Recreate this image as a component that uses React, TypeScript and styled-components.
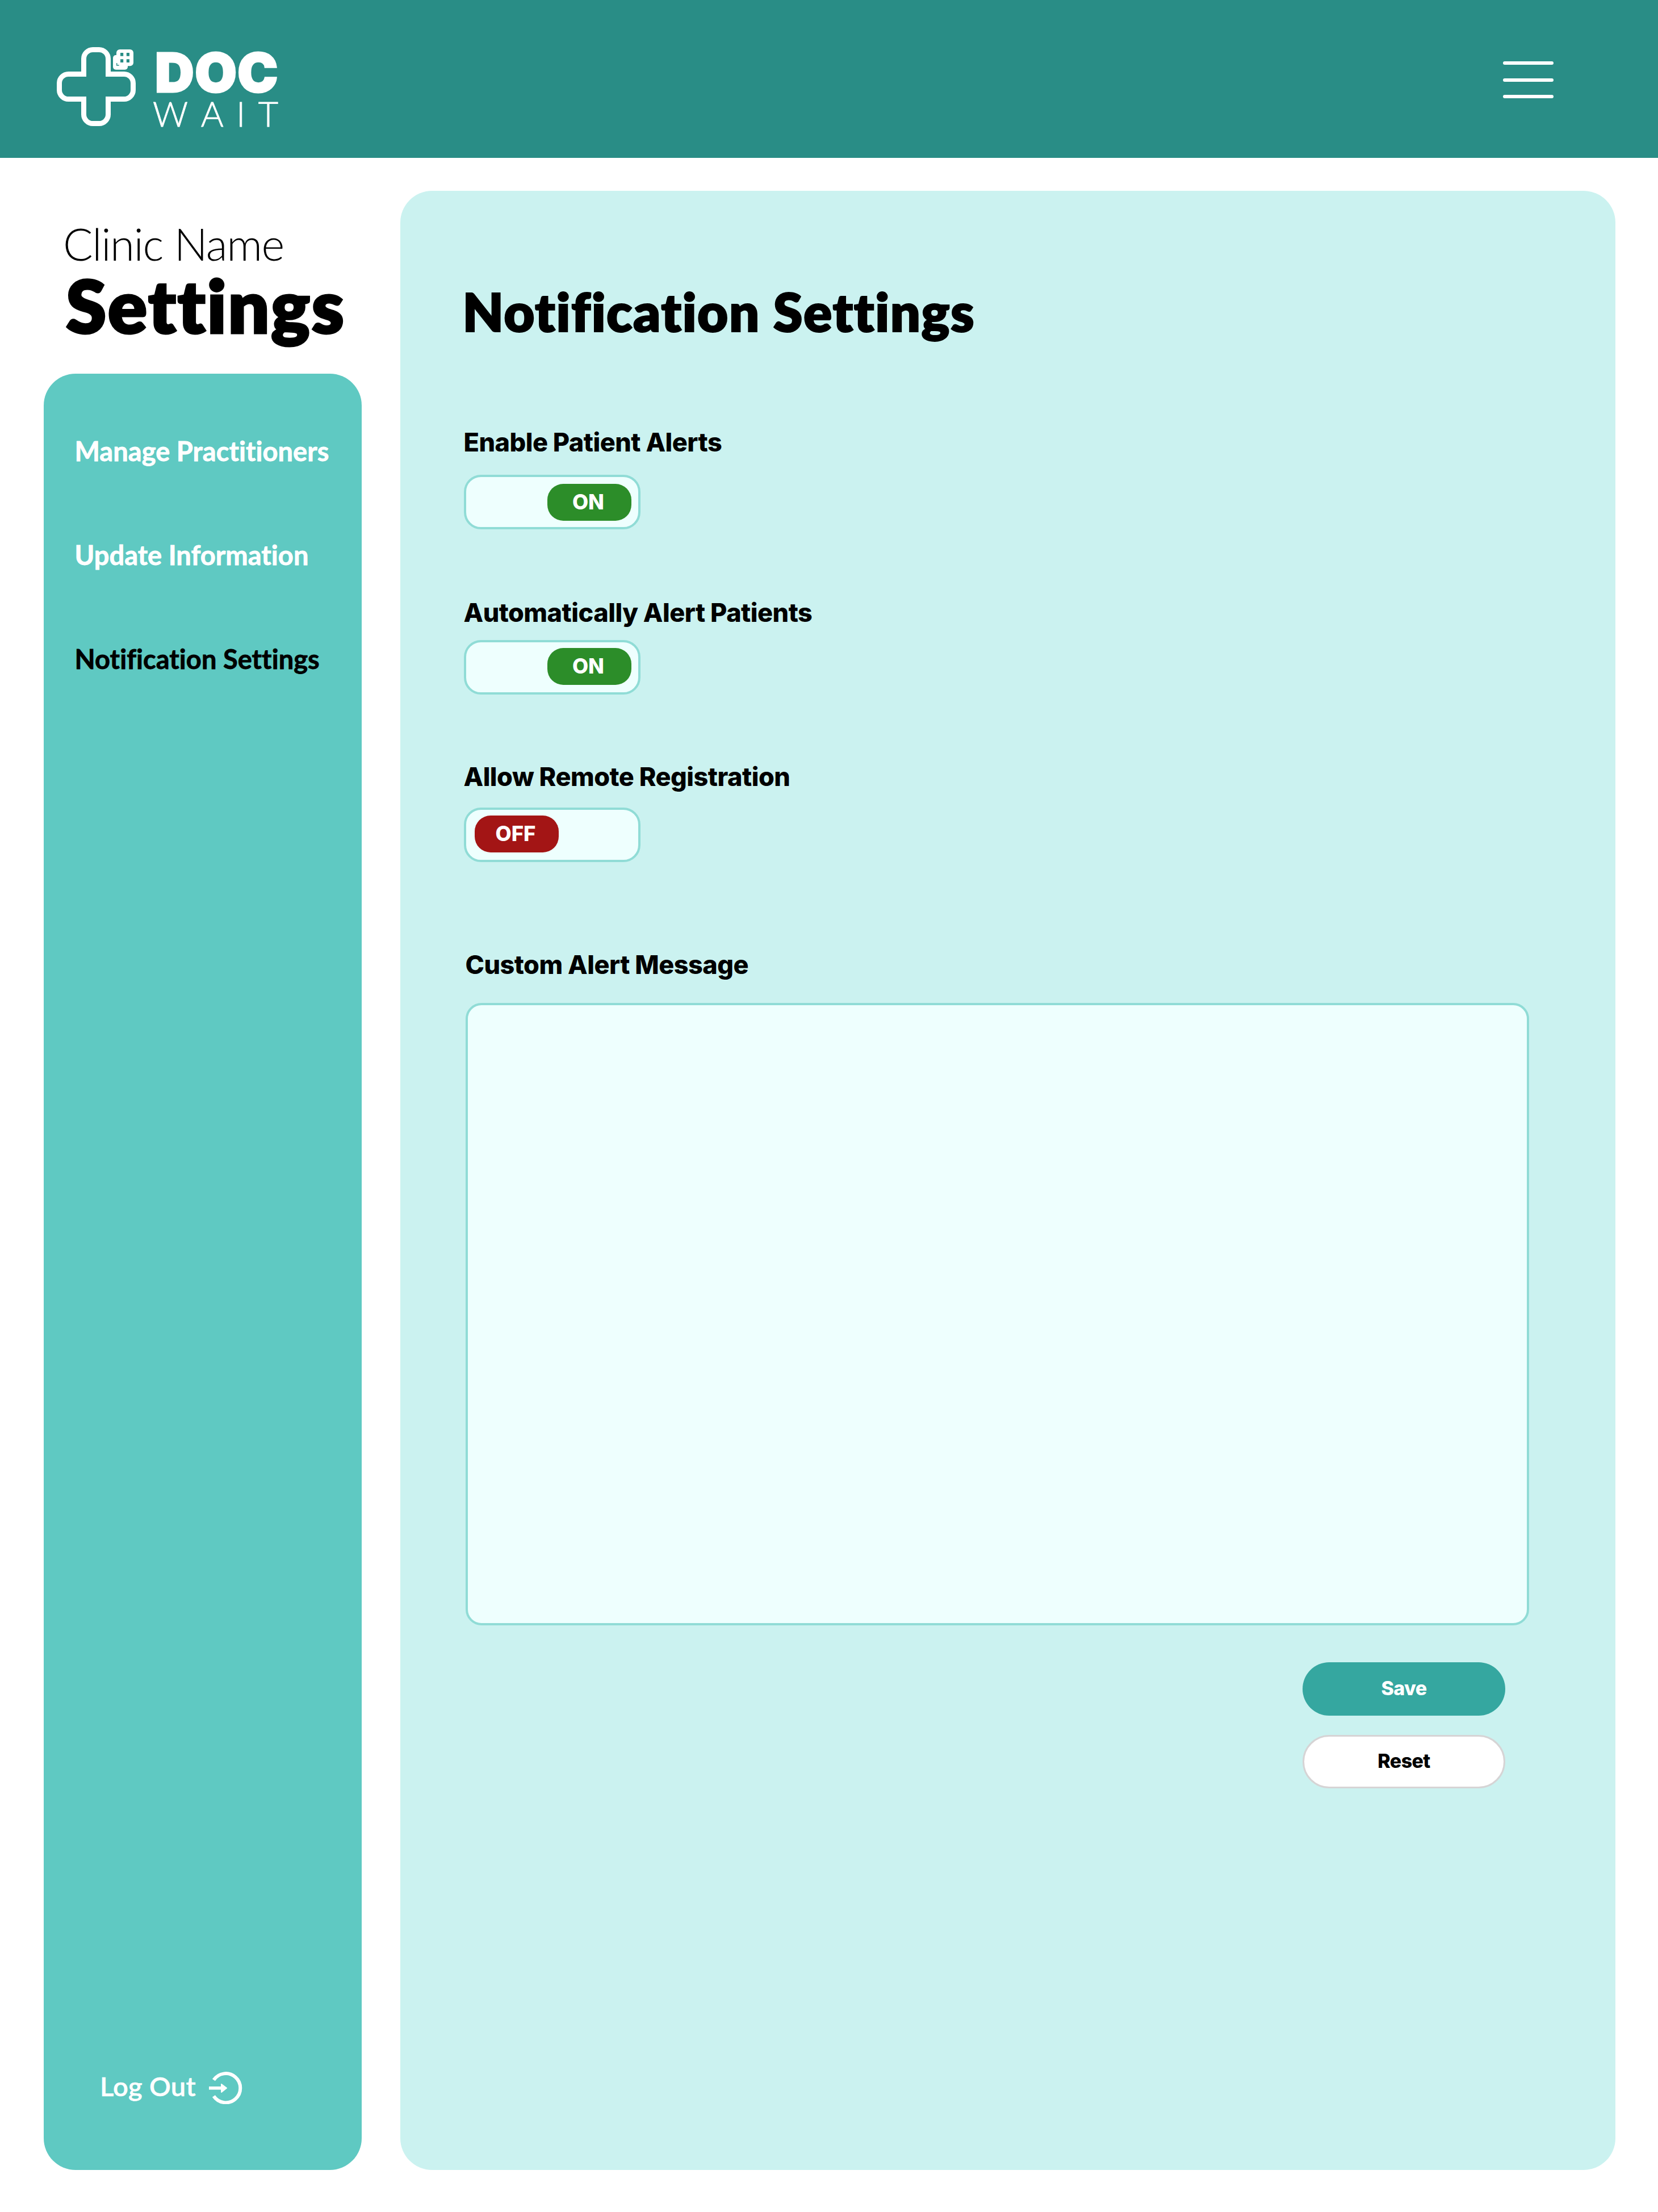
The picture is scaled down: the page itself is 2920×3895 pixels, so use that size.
import React from 'react';
import styled, { createGlobalStyle } from 'styled-components';

const GlobalStyle = createGlobalStyle`
  *, *::before, *::after { box-sizing: border-box; }
  body {
    margin: 0;
    background: #ffffff;
    color: #000000;
    font-family: Inter, 'Liberation Sans', sans-serif;
  }
  h1, h2, p { margin: 0; }
`;

const display = "Lato, 'Open Sans', sans-serif";

const Page = styled.div`
  width: 2920px;
  height: 3895px;
  display: flex;
  flex-direction: column;
`;

const Header = styled.header`
  flex: none;
  height: 278px;
  padding: 0 184px 0 95px;
  display: flex;
  justify-content: space-between;
  align-items: flex-start;
  background: #298d86;
  color: #ffffff;
`;

const Brand = styled.a`
  display: flex;
  padding-top: 78px;
`;

const LogoMark = styled.svg`
  width: 150px;
  height: 150px;
`;

const Wordmark = styled.div`
  display: flex;
  flex-direction: column;
  padding-top: 2px;
  margin-left: 24px;
`;

const WordTop = styled.span`
  margin-left: 4px;
  font-size: 95px;
  font-weight: 900;
  line-height: 1;
  letter-spacing: 1.5px;
  -webkit-text-stroke: 3px currentColor;
`;

const WordBottom = styled.span`
  margin-top: -6px;
  font-family: ${display};
  font-size: 61px;
  font-weight: 300;
  line-height: 1;
  letter-spacing: 22.6px;
  font-kerning: none;
  -webkit-text-stroke: 0.8px currentColor;
`;

const MenuButton = styled.button`
  margin: 108px 0 0;
  padding: 0;
  border: 0;
  background: none;
  width: 89px;
  height: 65px;
  display: flex;
  flex-direction: column;
  justify-content: space-between;
`;

const MenuLine = styled.span`
  height: 6px;
  border-radius: 3px;
  background: #ffffff;
`;

const Body = styled.div`
  flex: 1;
  display: flex;
  padding: 0 75px 74px 77px;
`;

const Sidebar = styled.aside`
  width: 560px;
  display: flex;
  flex-direction: column;
`;

const SidebarHeading = styled.div`
  height: 380px;
  padding: 112px 0 0 34px;
  display: flex;
  flex-direction: column;
  font-family: ${display};
  white-space: nowrap;
`;

const ClinicName = styled.p`
  font-size: 78px;
  font-weight: 300;
  line-height: 1;
  letter-spacing: -1.4px;
`;

const SidebarTitle = styled.h1`
  margin: 5px 0 0 5px;
  font-size: 129px;
  font-weight: 800;
  line-height: 1;
  letter-spacing: 2.3px;
  -webkit-text-stroke: 3px currentColor;
`;

const Nav = styled.nav`
  flex: 1;
  display: flex;
  flex-direction: column;
  gap: 136px;
  padding: 113px 53px 116px 54.5px;
  border-radius: 56px;
  background: #5fc9c2;
  font-family: ${display};
  font-size: 47px;
  line-height: 1;
  letter-spacing: 0.05px;
  white-space: nowrap;
`;

const NavItem = styled.a<{ $active?: boolean }>`
  color: ${p => (p.$active ? '#000000' : '#ffffff')};
  font-weight: 700;
  -webkit-text-stroke: 0.8px currentColor;
`;

const LogOut = styled.a`
  margin: auto 0 0 44.5px;
  display: flex;
  align-items: center;
  gap: 22px;
  color: #ffffff;
  font-weight: 600;
  letter-spacing: 0.3px;
`;

const LogOutText = styled.span`
  padding-bottom: 6px;
  -webkit-text-stroke: 0.5px currentColor;
`;

const LogOutIcon = styled.svg`
  width: 60px;
  height: 57px;
`;

const Panel = styled.main`
  flex: 1;
  margin: 58px 0 0 68px;
  padding: 166px 152px 0 111.5px;
  border-radius: 56px;
  background: #cbf2f0;
  display: flex;
  flex-direction: column;
`;

const PanelTitle = styled.h2`
  height: 94px;
  margin: 0 0 160.3px -2px;
  font-family: ${display};
  font-size: 93.5px;
  font-weight: 800;
  line-height: 1;
  letter-spacing: 1.5px;
  -webkit-text-stroke: 2px currentColor;
`;

const Field = styled.section<{ $gap: number; $after: number }>`
  display: flex;
  flex-direction: column;
  align-items: flex-start;
  gap: ${p => p.$gap}px;
  margin-bottom: ${p => p.$after}px;
`;

const Label = styled.label`
  height: 45px;
  font-size: 45px;
  font-weight: 800;
  line-height: 45px;
  letter-spacing: -0.5px;
  white-space: nowrap;
`;

const Track = styled.button<{ $on: boolean; $inset: number }>`
  width: 311px;
  height: 96px;
  padding: ${p => p.$inset}px 12px 0 15px;
  border: 4px solid #90dcd6;
  border-radius: 30px;
  background: #eefffe;
  display: flex;
  align-items: flex-start;
  justify-content: ${p => (p.$on ? 'flex-end' : 'flex-start')};
`;

const Knob = styled.span<{ $on: boolean }>`
  width: 148px;
  height: 65px;
  padding-right: 3px;
  border-radius: 28px;
  background: ${p => (p.$on ? '#2c8d29' : '#a31515')};
  color: #ffffff;
  font: 800 36.5px/65px Inter, 'Liberation Sans', sans-serif;
  text-align: center;
`;

const MessageField = styled(Field)`
  align-items: stretch;
  padding-left: 3px;
`;

const MessageBox = styled.textarea`
  display: block;
  width: 100%;
  height: 1096px;
  padding: 32px;
  border: 4px solid #90dcd6;
  border-radius: 28px;
  background: #eefffe;
  font: 400 40px/1.4 Inter, 'Liberation Sans', sans-serif;
  resize: none;
  outline: none;
`;

const Actions = styled.div`
  display: flex;
  flex-direction: column;
  align-items: flex-end;
  gap: 34px;
  padding-right: 42px;
`;

const ActionButton = styled.button<{ $primary?: boolean }>`
  width: 357px;
  height: 94px;
  padding: 0 0 2px;
  border: ${p => (p.$primary ? '0' : '3.5px solid #d6d4d5')};
  border-radius: 47px;
  background: ${p => (p.$primary ? '#35a7a0' : '#ffffff')};
  color: ${p => (p.$primary ? '#ffffff' : '#000000')};
  font: 800 34px/1 Inter, 'Liberation Sans', sans-serif;
  letter-spacing: -0.6px;
`;

const navItems = [
  { label: 'Manage Practitioners' },
  { label: 'Update Information' },
  { label: 'Notification Settings', active: true },
];

const toggles = [
  { label: 'Enable Patient Alerts', on: true, gap: 34.7, inset: 12, after: 124.3 },
  { label: 'Automatically Alert Patients', on: true, gap: 25.7, inset: 10, after: 122.3 },
  { label: 'Allow Remote Registration', on: false, gap: 31.7, inset: 10, after: 158.3 },
];

function Logo() {
  return (
    <LogoMark viewBox="95 78 150 150" fill="none">
      <path
        d="M163.5 87.5h11a16 16 0 0 1 16 16v27h28a16 16 0 0 1 16 16v12a16 16 0 0 1-16 16h-28v27a16 16 0 0 1-16 16h-11a16 16 0 0 1-16-16v-27h-27a16 16 0 0 1-16-16v-12a16 16 0 0 1 16-16h27v-27a16 16 0 0 1 16-16z"
        stroke="#fff"
        strokeWidth="9"
      />
      <rect x="199" y="97" width="26" height="25.7" rx="5" fill="#fff" />
      <rect x="205" y="87" width="30" height="29.3" rx="6" fill="#fff" />
      <path d="M205.7 111v4h4" stroke="#298d86" strokeWidth="1.4" />
      <rect x="212" y="93" width="16" height="17" fill="#298d86" />
      <path d="M220 93v17M212 101.5h16" stroke="#fff" strokeWidth="5.6" />
    </LogoMark>
  );
}

function LogOutGlyph() {
  return (
    <LogOutIcon viewBox="367 3648 60 57" fill="none">
      <path d="M376.4 3662.5a25.6 25.6 0 1 1 0 28.5" stroke="#fff" strokeWidth="6" />
      <path d="M368 3676.8h24" stroke="#fff" strokeWidth="5.6" />
      <path d="M390 3670l9 6.8-9 7.2z" fill="#fff" stroke="#fff" strokeWidth="2" strokeLinejoin="round" />
    </LogOutIcon>
  );
}

export default function App() {
  return (
    <>
      <GlobalStyle />
      <Page>
        <Header>
          <Brand>
            <Logo />
            <Wordmark>
              <WordTop>DOC</WordTop>
              <WordBottom>WAIT</WordBottom>
            </Wordmark>
          </Brand>
          <MenuButton aria-label="Menu">
            <MenuLine />
            <MenuLine />
            <MenuLine />
          </MenuButton>
        </Header>
        <Body>
          <Sidebar>
            <SidebarHeading>
              <ClinicName>Clinic Name</ClinicName>
              <SidebarTitle>Settings</SidebarTitle>
            </SidebarHeading>
            <Nav>
              {navItems.map(item => (
                <NavItem key={item.label} $active={item.active}>
                  {item.label}
                </NavItem>
              ))}
              <LogOut>
                <LogOutText>Log Out</LogOutText>
                <LogOutGlyph />
              </LogOut>
            </Nav>
          </Sidebar>
          <Panel>
            <PanelTitle>Notification Settings</PanelTitle>
            {toggles.map(t => (
              <Field key={t.label} $gap={t.gap} $after={t.after}>
                <Label>{t.label}</Label>
                <Track $on={t.on} $inset={t.inset} role="switch" aria-checked={t.on}>
                  <Knob $on={t.on}>{t.on ? 'ON' : 'OFF'}</Knob>
                </Track>
              </Field>
            ))}
            <MessageField $gap={44.7} $after={65}>
              <Label htmlFor="alert-message">Custom Alert Message</Label>
              <MessageBox id="alert-message" />
            </MessageField>
            <Actions>
              <ActionButton $primary>Save</ActionButton>
              <ActionButton>Reset</ActionButton>
            </Actions>
          </Panel>
        </Body>
      </Page>
    </>
  );
}
